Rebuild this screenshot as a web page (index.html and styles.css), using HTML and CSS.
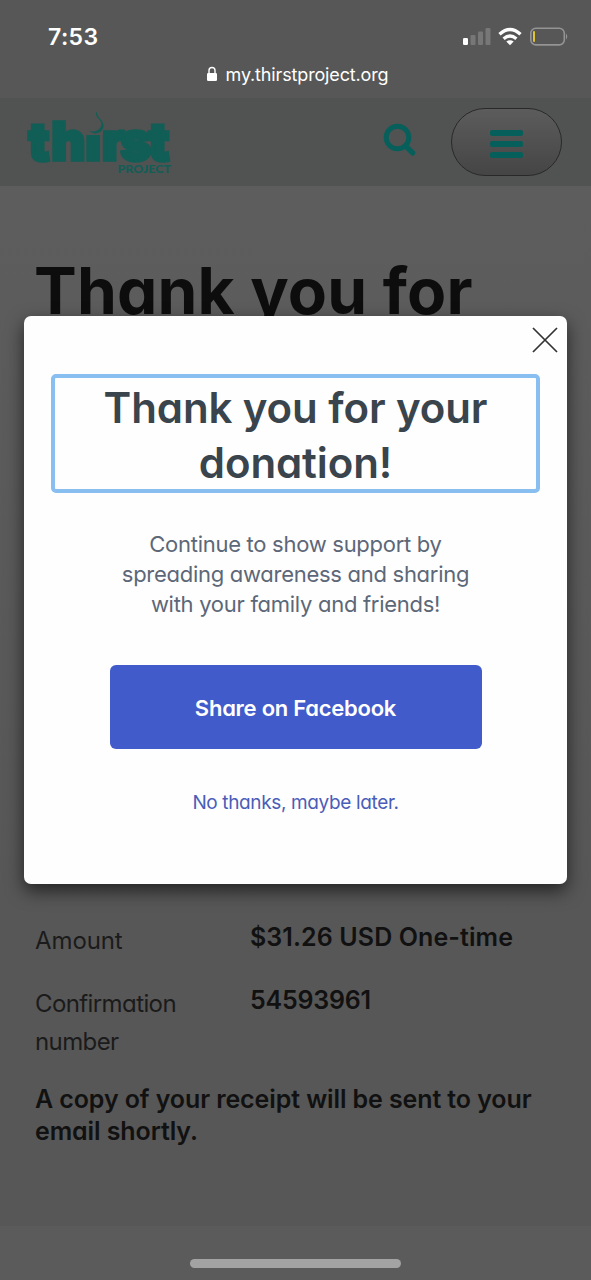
FILE: index.html
```
<!DOCTYPE html>
<html lang="en">
<head>
<meta charset="utf-8">
<title>Thirst Project</title>
<link rel="stylesheet" href="styles.css">
</head>
<body>
<div class="screen">
  <header class="browser-bar">
    <div class="status">
      <span class="clock">7:53</span>
      <svg class="status-icons" width="108" height="24" viewBox="0 0 108 24">
        <rect x="3" y="14" width="5" height="7" rx="1.2" fill="#fff"/>
        <rect x="10.500" y="11" width="5" height="10" rx="1.200" fill="#777"/>
        <rect x="18" y="7.500" width="5" height="13.500" rx="1.200" fill="#777"/>
        <rect x="25.500" y="4" width="5" height="17" rx="1.200" fill="#777"/>
        <g fill="none" stroke="#fff" stroke-width="3.300">
          <path d="M39.500 10.300Q50 .7 60.500 10.300"/>
          <path d="M43.600 14.700Q50 9.300 56.400 14.700"/>
        </g>
        <path d="M46.300 17.600Q50 14.800 53.700 17.600L50 21.300Z" fill="#fff"/>
        <rect x="70.800" y="4.300" width="33.500" height="16.600" rx="5" fill="none" stroke="#949494" stroke-width="1.600"/>
        <rect x="73" y="7" width="2" height="11" rx="1" fill="#e0c52f"/>
        <path d="M106 9.500Q108.500 12.600 106 15.700Z" fill="#949494"/>
      </svg>
    </div>
    <div class="address">
      <svg width="12" height="16" viewBox="0 0 12 16"><rect x="1" y="7" width="10" height="8" rx="1.300" fill="#fff"/><path d="M3 7.500V4.500a3 3 0 0 1 6 0v3" fill="none" stroke="#fff" stroke-width="1.400"/></svg>
      <span>my.thirstproject.org</span>
    </div>
  </header>
  <nav class="site-nav">
    <svg class="logo" width="150" height="68" viewBox="0 0 150 68">
      <text class="logo-word" x="2.500 25.500 59.500 76 94.500 122.500" y="51.500">thırst</text>
      <rect x="60" y="17" width="17" height="10" fill="#515252"/>
      <path d="M71 3.500C66.500 9.500 79 11.500 74.500 19.500C71.500 24 66.500 24 63 22.500C69 28.500 78 24.500 77.500 17C77 11 70 9.500 71 3.500Z" fill="#115e56"/>
      <text class="logo-sub" x="91.500" y="65" textLength="53.500" lengthAdjust="spacingAndGlyphs">PROJECT</text>
    </svg>
    <svg class="search" width="34" height="35" viewBox="0 0 34 35"><circle cx="14.500" cy="14.500" r="11.300" fill="none" stroke="#075f5b" stroke-width="5"/><path d="M22.500 22.800L29.600 29.900" stroke="#075f5b" stroke-width="5.400" stroke-linecap="round"/></svg>
    <div class="menu"><span class="bar"></span><span class="bar"></span><span class="bar"></span></div>
  </nav>
  <main class="page">
    <h1 class="page-title">Thank you for</h1>
    <section class="receipt">
      <div class="row"><span class="label amount">Amount</span><strong class="value usd">$31.26 USD One-time</strong></div>
      <div class="row"><span class="label">Confirmation<br>number</span><strong class="value">54593961</strong></div>
      <p class="note">A copy of your receipt will be sent to your<br>email shortly.</p>
    </section>
  </main>
  <footer class="toolbar"><span class="home"></span></footer>
  <div class="modal">
    <svg class="close" width="26" height="26" viewBox="0 0 26 26"><path d="M1 1L25 25M25 1L1 25" stroke="#333" stroke-width="1.700"/></svg>
    <h2 class="title">Thank you for your<br>donation!</h2>
    <p class="copy">Continue to show support by<br>spreading awareness and sharing<br>with your family and friends!</p>
    <div class="share">Share on Facebook</div>
    <div class="later">No thanks, maybe later.</div>
  </div>
</div>
</body>
</html>
```
FILE: styles.css
```
* { box-sizing: border-box; }
body { margin: 0; }
.screen {
  position: relative; width: 591px; height: 1280px; overflow: hidden;
  display: flex; flex-direction: column; background: #5b5b5b; color: #111;
  font-family: Inter, sans-serif; font-feature-settings: "cv11" 1;
  white-space: nowrap;
}
.browser-bar { height: 98px; background: #575757; color: #fff; }
.status { display: flex; justify-content: space-between; align-items: center; height: 48px; padding: 24px 23px 0 48px; }
.clock { font-size: 23px; font-weight: 600; line-height: 26px; letter-spacing: 0.4px; padding-top: 1px; font-feature-settings: normal; }
.address { display: flex; justify-content: center; align-items: center; gap: 8px; height: 24px; margin-top: 14px; font-size: 18px; letter-spacing: -0.15px; font-feature-settings: normal; padding-left: 3px; }
.site-nav { display: flex; align-items: flex-start; height: 88px; padding: 10px 29px 0 26px; background: #515252; }
.logo { flex: none; }
.logo-word { font: 900 52px Inter, sans-serif; fill: #115e56; stroke: #115e56; stroke-width: 3.5px; }
.logo-sub { font: 900 11px Lato, sans-serif; fill: #115e56; }
.search { margin: 15px 0 0 207px; }
.menu { width: 111px; height: 68px; margin-left: auto; border: 1.500px solid #292929; border-radius: 34px; background: linear-gradient(#5c5c5c, #454545); display: flex; flex-direction: column; align-items: center; justify-content: center; gap: 5px; padding-top: 4px; }
.bar { width: 33px; height: 6px; border-radius: 2px; background: #075f5b; }
.page { height: 1040px; padding: 63px 35px 0; background: linear-gradient(#5d5d5d, #575757 70%); }
.page-title { margin: 0 0 0 -1px; height: 84px; line-height: 84px; font-size: 64px; font-weight: 700; color: #0d0d0d; letter-spacing: 0.2px; }
.receipt { padding-top: 587px; font-size: 25px; }
.row { display: grid; grid-template-columns: 215px 1fr; line-height: 38px; margin-bottom: 23px; }
.label { color: #1b1b1b; font-size: 24px; letter-spacing: -0.6px; padding-top: 2px; }
.amount { letter-spacing: -0.1px; }
.value { font-size: 25px; font-weight: 600; letter-spacing: -0.2px; margin-top: -2px; }
.usd { letter-spacing: 0.1px; }
.note { margin: -1px 0 0; font-size: 25px; font-weight: 600; line-height: 32px; letter-spacing: -0.1px; }
.toolbar { height: 54px; background: #5b5b5b; display: flex; justify-content: center; align-items: flex-start; padding-top: 33px; }
.home { width: 211px; height: 9px; border-radius: 5px; background: #a3a3a3; }
.modal {
  position: absolute; left: 24px; top: 316px; width: 543px; height: 568px;
  border-radius: 7px; background: #fefefe; box-shadow: 0 7px 18px rgba(0,0,0,.6);
  display: flex; flex-direction: column; align-items: center;
}
.close { align-self: flex-end; margin: 11px 9px 0 0; }
.title { width: 489px; height: 119px; margin: 21px 0 0; padding-top: 2px; border: 4px solid #88bef0; border-radius: 5px; text-align: center; font-size: 42px; line-height: 55px; font-weight: 600; letter-spacing: -0.1px; color: #3a444c; }
.copy { margin: 36px 0 0; text-align: center; font-size: 22px; line-height: 30px; letter-spacing: -0.28px; color: #5c6778; }
.share { width: 372px; height: 84px; margin-top: 46px; border-radius: 6px; background: #425bcb; color: #fff; text-align: center; font-size: 22px; line-height: 86px; letter-spacing: -0.25px; font-weight: 600; }
.later { margin-top: 40px; font-size: 19px; line-height: 28px; letter-spacing: -0.36px; color: #4a5db8; }
```
